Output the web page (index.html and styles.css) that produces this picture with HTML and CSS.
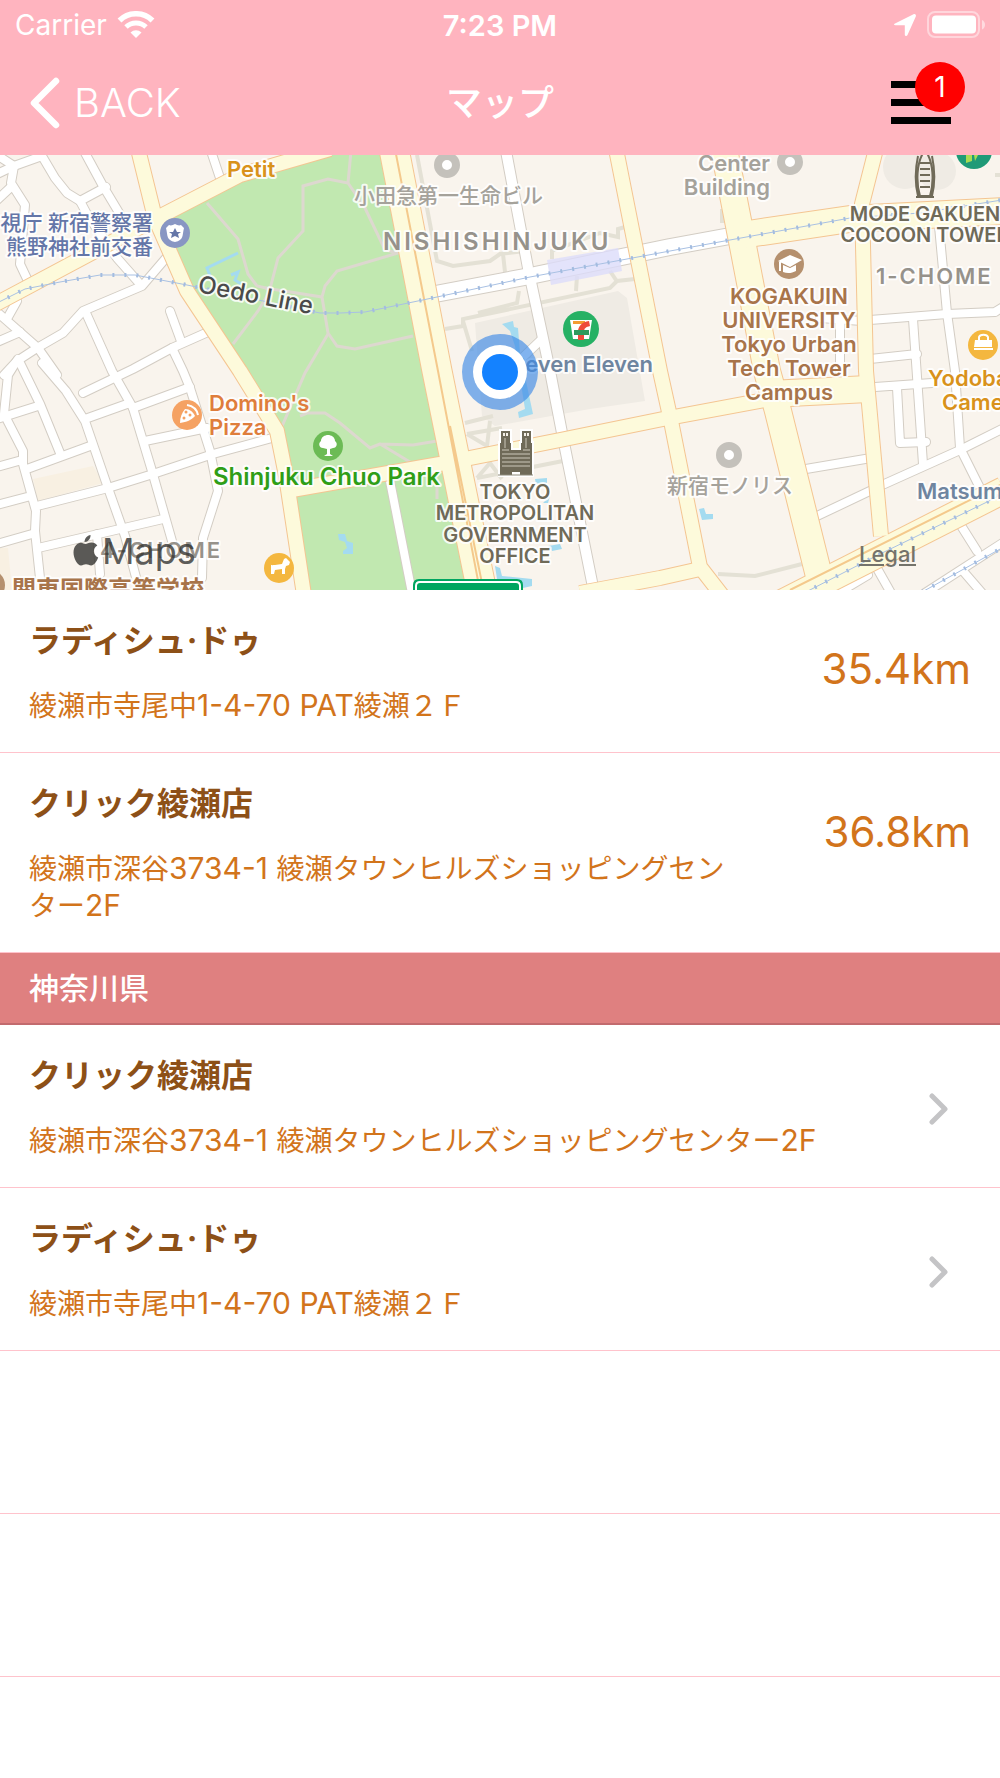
FILE: index.html
```html
<!DOCTYPE html>
<html lang="ja">
<head>
  <meta charset="UTF-8" />
  <meta name="viewport" content="width=device-width, initial-scale=1.0"/>
  <title>マップ</title>
  <link rel="stylesheet" href="styles.css">
</head>
<body>

<header class="header">
  <div class="status">
    <div class="status-left">
      <span>Carrier</span>
      <svg width="38" height="28" viewBox="0 0 38 28" fill="none" stroke="#fff">
        <path d="M2.500 9.500a23.500 23.500 0 0 1 33 0" stroke-width="5.500"/>
        <path d="M9 16a14.500 14.500 0 0 1 20 0" stroke-width="5"/>
        <path d="M13.500 21.500a8 8 0 0 1 11 0L19 27z" fill="#fff" stroke="none"/>
      </svg>
    </div>
    <div class="status-time">7:23 PM</div>
    <div class="status-right">
      <svg width="24" height="24" viewBox="0 0 24 24" fill="#fff">
        <path d="M2 10.500 20.500 1.200c1.500-.8 3 .5 2.300 2.200L14.500 22c-.8 1.600-2.700 1.200-2.700-.5v-9.300H2.500c-1.700 0-2-1.100-.5-1.700z"/>
      </svg>
      <svg width="58" height="28" viewBox="0 0 58 28">
        <rect x="1" y="1" width="51" height="25" rx="7" fill="none" stroke="#fff" stroke-opacity=".45" stroke-width="2"/>
        <rect x="5" y="4.500" width="44" height="18" rx="4" fill="#fff"/>
        <path d="M55 9c4 1.500 4 8 0 9.500z" fill="#fff" fill-opacity=".5"/>
      </svg>
    </div>
  </div>
  <nav class="nav">
    <button class="back">
      <svg width="30" height="52" viewBox="0 0 30 52" fill="none" stroke="#fff" stroke-width="6.500" stroke-linecap="round" stroke-linejoin="round">
        <path d="M26 4 4 26l22 22"/>
      </svg>
      <span>BACK</span>
    </button>
    <h1>マップ</h1>
    <button class="menu" aria-label="メニュー">
      <span class="bar"></span>
      <span class="bar"></span>
      <span class="bar"></span>
      <span class="badge">1</span>
    </button>
  </nav>
</header>

<main>
  <div class="map">
    <svg class="map-canvas" viewBox="0 154 1000 435" preserveAspectRatio="xMidYMid slice">
      <defs>
        <g id="streets">
          <path d="M-5 174 14 165 42 155 55 177 67 192 80 200 106 186"/>
          <path d="M-3 154 14 165 11 182 25 204 22 240 20 263 29 282"/>
          <path d="M-3 199 11 186"/>
          <path d="M84 150 103 185 124 220 130 235"/>
          <path d="M80 200 88 215 117 257 140 283"/>
          <path d="M166 257 142 285 83 310 63 332 37 347 17 360 4 374"/>
          <path d="M-3 311 38 347 57 374"/>
          <path d="M-3 341 20 331M17 300 8 316"/>
          <path d="M42 362 66 390 85 420 108 487 125 535 137 580"/>
          <path d="M86 312 112 370 133 407 152 470 172 540"/>
          <path d="M170 310 181 340"/>
          <path d="M208 331 172 347 133 368 83 392"/>
          <path d="M172 347 183 370 190 387 210 450 218 490 203 537 202 577"/>
          <path d="M18 358 8 374 4 413 23 450 23 463 36 510 35 530 40 577"/>
          <path d="M-3 418 38 405M20 362 40 403 60 452"/>
          <path d="M-3 466 22 459M27 468 90 445"/>
          <path d="M85 418 127 403M133 407 190 386M145 440 207 427"/>
          <path d="M-3 504 27 496M37 505 108 487 153 473 213 453 272 437"/>
          <path d="M-3 543 32 533M38 547 163 518M97 533 100 573"/>
          <path d="M211 150 220 177"/>
          <path d="M520 359 543 337M390 480 412 592"/>
          <path d="M939 225 947 312 955 370 960 447 980 487"/>
          <path d="M870 319 947 313 995 311 1003 306"/>
          <path d="M913 318 918 390 923 463M870 358 917 353"/>
          <path d="M875 386 932 382M897 387 900 442 926 441M840 317V385"/>
          <path d="M880 485 960 449 1004 427M815 516 874 488M800 469 871 457"/>
          <path d="M960 523 977 550M925 592 1004 541M963 570 982 592"/>
          <path d="M838 592 868 574M874 562 891 592M820 317 862 320"/>
        </g>
        <g id="avenues">
          <path d="M430 294 530 275 670 246 730 235"/>
        </g>
        <g id="cross">
          <path d="M506 150 528 267 550 370 563 437 593 586"/>
        </g>
        <g id="roads">
          <path d="M-6 304 157 217 240 174 330 148"/>
          <path d="M138 148 155 217 187 290 240 370 277 430 286 475 304 594"/>
          <path d="M286 490 440 463 560 439 663 418 770 398"/>
          <path d="M616 148 660 370 671 420 700 566 728 602"/>
          <path d="M580 592 660 577 700 568"/>
          <path d="M876 148 862 203 866 370 881 535"/>
        </g>
        <g id="highways">
          <path d="M724 148 742 240 767 370 778 410 819 575"/>
          <path d="M735 235 850 218 1004 210"/>
          <path d="M770 393 868 388"/>
          <path d="M780 603 1004 489"/>
        </g>
        <g id="boulevard">
          <path d="M394 148 437 370 483 596"/>
        </g>
        <g id="rails">
          <path d="M-3 302 25 288 60 281 100 274 135 274 187 284 320 312 340 312 365 311 437 296 530 276 670 250 850 217 920 212 1002 199"/>
          <path d="M804 592 880 553 987 501 1002 493"/>
          <path d="M922 591 1002 547"/>
        </g>
      </defs>

      <rect class="land" x="0" y="154" width="1000" height="435"/>
      <path class="block" d="M33 478 93 465 103 482 38 500zM0 547h8l4 43H0z"/>

      <!-- parks -->
      <path class="park" d="M157 217 250 170 325 150H390L436 370 455 462 290 485 277 430 240 370 187 290z"/>
      <path class="park" d="M290 485 455 462 480 590H305z"/>
      <g class="trail">
        <path d="M207 202 238 238 248 273 257 285 270 288 278 257 303 230V185L328 178 348 182 365 207 385 249 398 252 337 270 325 285 322 296 328 332 337 345 355 348 413 335"/>
        <path d="M351 150 348 182M265 287 322 296M270 290 258 310 233 343M328 333 305 372 280 430"/>
        <path d="M300 415 307 412 325 412 340 422 370 447 380 443 410 461M380 443 413 444 437 440M437 480V498"/>
      </g>

      <!-- buildings and walkways -->
      <path class="building" d="M475 322 618 290 627 297 645 400 590 408 495 425 482 415z"/>
      <circle class="building" cx="905" cy="166" r="22"/>
      <circle class="building" cx="937" cy="170" r="19"/>
      <g class="walkway">
        <path d="M417 154 437 260 453 265 490 260 500 253 525 250M503 253 505 271"/>
        <path d="M478 312 517 302 519 290M445 328 463 325V318L610 287 617 280 635 278M618 282 610 270M577 275 576 290"/>
        <path d="M463 320 472 350M552 258V250L600 232 618 236V228L625 226"/>
        <path d="M465 422 493 415M467 433 502 427M467 433 487 445 490 420M477 477 490 462 502 478M477 477 563 460"/>
        <path d="M718 573 755 575 802 563M722 208V222M995 174H1004"/>
      </g>
      <g class="water">
        <path d="M502 323 513 320 514 326 518 327 520 352 533 413 519 417 518 411 525 408 515 345 510 330z"/>
        <path d="M535 478 547 477V482L536 483zM550 495 548 502 543 502zM548 545 560 543 562 548 552 550z"/>
        <path d="M495 565 500 567 502 575 532 578V585L523 587 497 578z"/>
        <path d="M699 508 704 507 706 513 713 513V518L702 519z"/>
        <path d="M338 533H345L347 540 353 542V553H343V550L347 547 345 541 339 539z"/>
      </g>
      <path class="stream" d="M238 252 207 267 211 277M231 274 238 271 235 279 241 283"/>

      <!-- roads: outline first, then the surface -->
      <use href="#streets" class="street-line"/>
      <use href="#avenues" class="avenue-line"/>
      <use href="#cross" class="cross-line"/>
      <use href="#streets" class="street"/>
      <use href="#avenues" class="avenue"/>
      <use href="#cross" class="cross"/>
      <use href="#roads" class="road-line"/>
      <use href="#highways" class="highway-line"/>
      <use href="#boulevard" class="boulevard-line"/>
      <use href="#roads" class="road"/>
      <use href="#highways" class="highway"/>
      <use href="#boulevard" class="boulevard"/>
      <path class="median" d="M395 148 438 370 480 590M790 589 1004 482M450 425 484 592"/>

      <path class="station" d="M547 259 618 247 622 270 551 284z"/>
      <use href="#rails" class="rail"/>
      <use href="#rails" class="rail-ticks"/>

      <!-- pins -->
      <circle cx="175" cy="232" r="15" fill="#8896c3"/>
      <path d="M169 224c2 1 4 0 6-1 2 1 4 2 6 1l3 3c-2 8 0 12-9 14-9-2-7-6-9-14z" fill="#fff"/>
      <path d="m175 227 2 4h4l-3 2 1 4-4-2-4 2 1-4-3-2h4z" fill="#6476a8"/>

      <g fill="none" stroke="#c4c1bb" stroke-width="8">
        <circle cx="447" cy="164" r="9" fill="#fff"/>
        <circle cx="790" cy="161" r="9" fill="#fff"/>
        <circle cx="729" cy="454" r="9" fill="#fff"/>
      </g>

      <circle cx="581" cy="328" r="18" fill="#26b164"/>
      <path d="M570 319h22l-3 19h-16z" fill="#fff"/>
      <path d="M573 320h12v3h-12z" fill="#f39c32"/>
      <path d="M589 320c-7 1-11 5-11 11v8h6v-8c0-4 2-5 6-6z" fill="#ee4b3a"/>
      <path d="M574 329h15v5h-15z" fill="#2e9a5c"/>

      <circle cx="789" cy="263" r="15" fill="#b5906e"/>
      <path d="m778 260 12-6 12 5-12 7zM783 264v7c5 2 9 1 13-1v-6l-6 3zM779 261h2v9h-2z" fill="#fff"/>

      <circle cx="983" cy="344" r="15" fill="#f4b73f"/>
      <path d="M975 339h17v7h-18zM974 347h19v2h-19z" fill="#fff"/>
      <path d="M979 339v-3c1-3 8-3 9 0v3" fill="none" stroke="#fff" stroke-width="2"/>

      <circle cx="187" cy="414" r="15" fill="#f5a263"/>
      <path d="M180 422c0-6 2-10 5-14 5 0 8 3 10 7-4 4-8 6-15 7z" fill="#fff"/>
      <path d="M187 404c6 1 10 5 11 10" fill="none" stroke="#fff" stroke-width="2"/>
      <g fill="#f5a263"><circle cx="186" cy="411" r="1.500"/><circle cx="190" cy="414" r="1.500"/><circle cx="184" cy="417" r="1.500"/></g>

      <circle cx="328" cy="445" r="15" fill="#6cbb55"/>
      <path d="M323 447c-4 0-5-5-2-7 0-4 4-6 7-6s7 2 7 6c3 2 2 7-2 7l-3 1v5l3 2h-9l3-2v-5z" fill="#fff"/>

      <circle cx="279" cy="567" r="15" fill="#f4b73f"/>
      <path d="M270 562c1 3 2 2 5 2l7-1 2-5 2-1 4 4-1 3-3 1-1 3v5h-3v-5l-7 1-1 4h-3v-9z" fill="#fff"/>

      <circle cx="974" cy="150" r="18" fill="#1f9a77"/>
      <path d="M966 154h6v6l-6 2zM974 154h4l-3 6z" fill="#a9dc52"/>
      <circle cx="-10" cy="584" r="15" fill="#b5906e"/>

      <!-- landmarks -->
      <g class="landmark">
        <path d="M925 149c-9 12-9 33-5 46h10c4-13 4-34-5-46zM918 155c-3 14-3 28 0 40M932 155c3 14 3 28 0 40M916 196h18"/>
        <path d="M920 162h10M920 168h10M920 174h10M920 180h10M920 186h10"/>
      </g>
      <g>
        <path d="M501 430h9v12h1v7h10v-7h1v-12h9v12h1v32h-32v-32h1z" fill="#6f6a58" stroke="#fff" paint-order="stroke" stroke-width="4"/>
        <path d="M503 432h2v3h-2zM506 432h2v3h-2zM524 432h2v3h-2zM527 432h2v3h-2z" fill="#f4efe6"/>
        <path d="M502 453h28M502 457h28M502 461h28M502 465h28M502 449h7M523 449h7" stroke="#cdc8ba" stroke-width="1"/>
        <path d="M505 437v10M526 437v10" stroke="#cdc8ba" stroke-width="1"/>
        <path d="M512 471h8v3h-8z" fill="#fff"/>
        <path d="M498 474h35" stroke="#8d8978" stroke-width="1"/>
      </g>
      <path d="M413 590v-6q0-6 6-6h98q6 0 6 6v6z" fill="#00a560"/>
      <path d="M416 590v-5q0-4 4-4h96q4 0 4 4v5" fill="none" stroke="#fff" stroke-width="2"/>

      <!-- labels -->
      <g class="label">
        <text x="227" y="176" fill="#d9921b">Petit</text>
        <text class="small" fill="#6476a8" text-anchor="end"><tspan x="153" y="229">視庁 新宿警察署</tspan><tspan x="153" y="253">熊野神社前交番</tspan></text>
        <text class="line-name" transform="translate(197 291) rotate(11)" fill="#4a4a4a">Oedo Line</text>
        <text class="small" x="354" y="202" fill="#a5a29b">小田急第一生命ビル</text>
        <text class="district large" x="383" y="249">NISHISHINJUKU</text>
        <text x="653" y="371" fill="#6f85a0" text-anchor="end">Seven Eleven</text>
        <text fill="#a5a29b" text-anchor="end"><tspan x="770" y="170">Center</tspan><tspan x="770" y="194">Building</tspan></text>
        <text class="sight" text-anchor="middle"><tspan x="925" y="220">MODE GAKUEN</tspan><tspan x="925" y="241">COCOON TOWER</tspan></text>
        <text class="district" x="876" y="283">1-CHOME</text>
        <text fill="#a8744a" text-anchor="middle"><tspan x="789" y="303">KOGAKUIN</tspan><tspan x="789" y="327">UNIVERSITY</tspan><tspan x="789" y="351">Tokyo Urban</tspan><tspan x="789" y="375">Tech Tower</tspan><tspan x="789" y="399">Campus</tspan></text>
        <text fill="#d9921b"><tspan x="928" y="385">Yodoba</tspan><tspan x="942" y="409">Came</tspan></text>
        <text fill="#df7e3c"><tspan x="209" y="410">Domino's</tspan><tspan x="209" y="434">Pizza</tspan></text>
        <text class="large" x="213" y="484" fill="#2f9e17">Shinjuku Chuo Park</text>
        <text class="sight" text-anchor="middle"><tspan x="515" y="498">TOKYO</tspan><tspan x="515" y="519">METROPOLITAN</tspan><tspan x="515" y="541">GOVERNMENT</tspan><tspan x="515" y="562">OFFICE</tspan></text>
        <text class="small" x="667" y="492" fill="#a5a29b">新宿モノリス</text>
        <text x="917" y="498" fill="#6f85a0">Matsum</text>
        <text class="district" x="100" y="557">4-CHOME</text>
        <text class="large" x="12" y="597" fill="#a8744a">関東国際高等学校</text>
      </g>

      <!-- current position -->
      <circle cx="500" cy="371" r="38" fill="#3d8be6" fill-opacity=".65"/>
      <circle cx="500" cy="371" r="27" fill="#fff"/>
      <circle cx="500" cy="371" r="18" fill="#1482ff"/>
    </svg>

    <div class="map-logo">
      <svg width="26" height="32" viewBox="0 0 26 32" fill="currentColor">
        <path d="M17.500 0c.4 3.500-2.600 7-6 7 0-3.500 2.800-6.600 6-7z"/>
        <path d="M12.500 9c1.500 0 3-1.500 6-1.500 2.500 0 4.500 1.300 5.800 3-5 3-4.300 9.800.9 12-1.500 4-4.200 8-7 8-2 0-3-1.200-5.200-1.200S10 30.500 8 30.500C4.500 30.500.5 23.500.5 17.500c0-6 3.700-9.800 7.300-9.800 2 0 3.500 1.300 4.700 1.300z"/>
      </svg>
      <span>Maps</span>
    </div>
    <a class="legal" href="#legal">Legal</a>
  </div>

  <ul class="shops">
    <li class="shop">
      <div class="shop-info">
        <div class="name">ラディシュ·ドゥ</div>
        <div class="address">綾瀬市寺尾中<span class="latin">1-4-70 PAT</span>綾瀬２Ｆ</div>
      </div>
      <div class="distance">35.4km</div>
    </li>
    <li class="shop">
      <div class="shop-info">
        <div class="name">クリック綾瀬店</div>
        <div class="address">綾瀬市深谷<span class="latin">3734-1 </span>綾瀬タウンヒルズショッピングセンター<span class="latin">2F</span></div>
      </div>
      <div class="distance">36.8km</div>
    </li>
  </ul>

  <h2 class="area">神奈川県</h2>

  <ul class="shops">
    <li>
      <a class="shop" href="#click-ayase">
        <div class="shop-info">
          <div class="name">クリック綾瀬店</div>
          <div class="address">綾瀬市深谷<span class="latin">3734-1 </span>綾瀬タウンヒルズショッピングセンター<span class="latin">2F</span></div>
        </div>
        <svg class="arrow" width="20" height="32" viewBox="0 0 20 32"><path d="M3 3 16 16 3 29"/></svg>
      </a>
    </li>
    <li>
      <a class="shop" href="#radish-deux">
        <div class="shop-info">
          <div class="name">ラディシュ·ドゥ</div>
          <div class="address">綾瀬市寺尾中<span class="latin">1-4-70 PAT</span>綾瀬２Ｆ</div>
        </div>
        <svg class="arrow" width="20" height="32" viewBox="0 0 20 32"><path d="M3 3 16 16 3 29"/></svg>
      </a>
    </li>
    <li class="shop empty"></li>
    <li class="shop empty"></li>
  </ul>
</main>

</body>
</html>
```
FILE: styles.css
```css
* {
  box-sizing: border-box;
}
body {
  margin: 0;
  background: white;
  font-family: Inter, "Noto Sans CJK JP", sans-serif;
}
button {
  border: none;
  padding: 0;
  background: none;
  font-family: inherit;
  cursor: pointer;
}
a {
  color: inherit;
  text-decoration: none;
}

/* header */
.header {
  background: #ffb4bf;
  color: white;
}
.status {
  display: grid;
  grid-template-columns: 1fr auto 1fr;
  align-items: center;
  height: 50px;
  padding: 0 15px;
  font-size: 28px;
}
.status-left,
.status-right {
  display: flex;
  align-items: center;
  gap: 10px;
}
.status-right {
  justify-content: flex-end;
}
.status-time {
  font-size: 29px;
  font-weight: 600;
}
.nav {
  display: grid;
  grid-template-columns: 1fr auto 1fr;
  align-items: center;
  height: 105px;
  padding: 0 30px;
}
.nav h1 {
  margin: 0;
  padding-bottom: 6px;
  font-size: 36px;
  font-weight: 500;
}
.back {
  display: flex;
  align-items: center;
  gap: 14px;
  color: white;
  font-size: 40px;
  font-weight: 300;
  line-height: 50px;
}
.menu {
  position: relative;
  justify-self: end;
  display: flex;
  flex-direction: column;
  gap: 11px;
  width: 60px;
  margin-right: 19px;
}
.bar {
  height: 7px;
  background: black;
}
.badge {
  position: absolute;
  top: -19px;
  right: -14px;
  width: 50px;
  height: 50px;
  border-radius: 50%;
  background: red;
  color: white;
  font-size: 28px;
  line-height: 50px;
}

/* map */
.map {
  position: relative;
  height: 435px;
  overflow: hidden;
}
.map-canvas {
  display: block;
  width: 100%;
  height: 100%;
}
.land { fill: #f9f4ed; }
.block { fill: #f8f0e2; }
.park { fill: #c1e8b0; }
.building { fill: #efebe4; }
.water { fill: #a4dbf0; }
.station { fill: #dcdcfa; fill-opacity: 0.8; }
.stream, .trail, .walkway, .median, .rail, .rail-ticks, .landmark, .arrow { fill: none; }
.stream { stroke: #a4dbf0; stroke-width: 3; }
.trail { stroke: #ddd8cf; stroke-width: 3; }
.walkway { stroke: #e4e1d5; stroke-width: 4; }
.street-line, .avenue-line, .cross-line { fill: none; stroke: #d3cdc4; stroke-linejoin: round; }
.street, .avenue, .cross { fill: none; stroke: white; stroke-linejoin: round; stroke-linecap: round; }
.street-line { stroke-width: 10; stroke-linecap: round; }
.street { stroke-width: 8; }
.avenue-line { stroke-width: 18; }
.avenue { stroke-width: 16; }
.cross-line { stroke-width: 12; }
.cross { stroke-width: 10; }
.road-line, .highway-line, .boulevard-line { fill: none; stroke: #f4c592; stroke-linejoin: round; }
.road, .highway, .boulevard { fill: none; stroke: #fdfadb; stroke-linejoin: round; }
.road-line { stroke-width: 16; }
.road { stroke-width: 14; }
.highway-line { stroke-width: 28; }
.highway { stroke-width: 26; }
.boulevard-line { stroke-width: 31; }
.boulevard { stroke-width: 29; }
.median { stroke: #f4c98c; stroke-width: 2; }
.rail { stroke: #a9c1e3; stroke-width: 1; }
.rail-ticks { stroke: #a3bce0; stroke-width: 4; stroke-dasharray: 2 10; }
.landmark { stroke: #6f6a58; stroke-width: 2; }
.label {
  font-size: 22px;
  font-weight: 600;
  stroke: white;
  stroke-opacity: 0.85;
  stroke-width: 4;
  stroke-linejoin: round;
  paint-order: stroke;
}
.small { font-size: 21px; font-weight: 500; }
.large, .line-name { font-size: 24px; font-weight: 600; }
.line-name { font-weight: 500; }
.district { fill: #96928b; letter-spacing: 2px; }
.district.large { letter-spacing: 3px; }
.sight { fill: #6f6a58; font-size: 20px; }
.map-logo {
  position: absolute;
  left: 73px;
  bottom: 19px;
  display: flex;
  align-items: center;
  gap: 3px;
  color: rgba(50, 50, 48, 0.8);
  font-size: 36px;
  line-height: 40px;
}
.legal {
  position: absolute;
  right: 84px;
  bottom: 22px;
  color: #74736b;
  font-size: 22px;
  font-weight: 500;
  line-height: 28px;
  text-decoration: underline;
}

/* shop list */
.shops {
  margin: 0;
  padding: 0;
  list-style: none;
}
.shop {
  display: flex;
  justify-content: space-between;
  min-height: 163px;
  padding: 32px 29px 27px;
  border-bottom: 1px solid #ffc3cc;
  color: #d2741b;
}
.shop-info {
  flex: 1;
  max-width: 800px;
}
.name {
  margin-bottom: 28px;
  color: #8d5017;
  font-size: 32px;
  font-weight: 700;
  line-height: 38px;
}
.address {
  height: auto;
  font-size: 28px;
  line-height: 37px;
}
.latin {
  font-size: 30px;
  line-height: 1;
}
.distance {
  margin-left: 85px;
  font-size: 42px;
  line-height: 94px;
}
.arrow {
  align-self: center;
  margin-right: 22px;
  stroke: #c4c4c6;
  stroke-width: 5;
  stroke-linecap: round;
  stroke-linejoin: round;
}
.area {
  margin: 0;
  padding: 0 29px;
  border-bottom: 2px solid #c26b6e;
  background: #df8080;
  color: white;
  font-size: 30px;
  font-weight: 500;
  line-height: 70px;
}
```
